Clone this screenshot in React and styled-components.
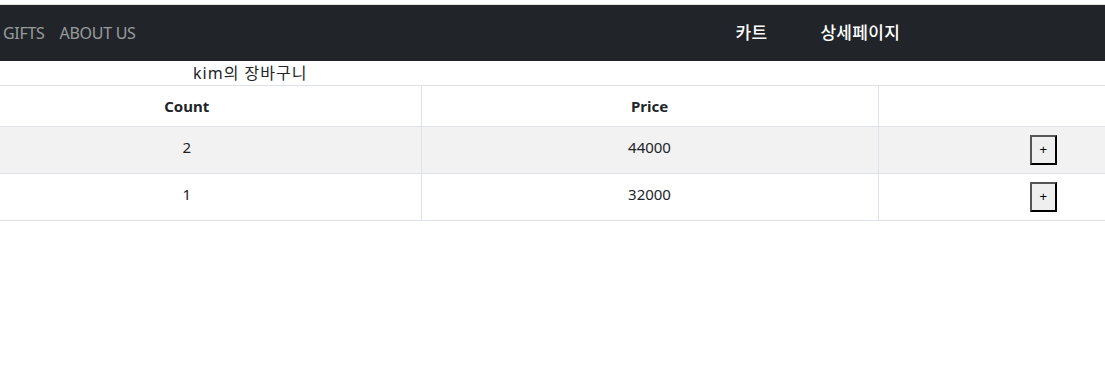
import React from 'react';
import styled, { createGlobalStyle } from 'styled-components';

const GlobalStyle = createGlobalStyle`
  html, body {
    margin: 0;
    padding: 0;
    background: #fff;
    overflow: hidden;
  }
  body {
    font-family: "Noto Sans", "Noto Sans CJK KR", sans-serif;
    color: #212529;
    font-size: 16px;
  }
`;

const Page = styled.div`
  width: 1105px;
  padding-top: 4px;
`;

const Navbar = styled.nav`
  height: 56px;
  background: #212529;
  border-top: 1px solid #e3e3e3;
  display: flex;
  align-items: center;
  padding-left: 3px;
`;

const NavGroup = styled.div`
  display: flex;
  align-items: center;
  gap: ${props => props.$gap}px;
  margin-left: ${props => props.$offset || 0}px;
`;

const NavLink = styled.a`
  font-size: ${props => (props.$active ? 17 : 16)}px;
  letter-spacing: ${props => (props.$active ? '0.3px' : '-0.3px')};
  color: ${props => (props.$active ? '#fff' : 'rgba(255, 255, 255, 0.55)')};
  font-weight: ${props => (props.$active ? 500 : 400)};
  text-decoration: none;
  line-height: 24px;
`;

const CartTitle = styled.div`
  height: 24px;
  line-height: 24px;
  padding-left: 193px;
  font-size: 16px;
  letter-spacing: 1px;
`;

const TableWrap = styled.div`
  margin-left: -47px;
`;

const Table = styled.table`
  border-collapse: collapse;
  width: 1255px;
  table-layout: fixed;
  font-size: 15px;

  th,
  td {
    border-top: 1px solid #dee2e6;
    border-bottom: 1px solid #dee2e6;
    text-align: center;
    vertical-align: top;
    padding: 8px;
    line-height: 24px;
  }

  th + th,
  td + td {
    border-left: 1px solid #dee2e6;
  }

  th {
    font-weight: 700;
  }
`;

const Row = styled.tr`
  background: ${props => (props.$striped ? '#f2f2f2' : '#fff')};
`;

const PlusButton = styled.button`
  width: 27px;
  height: 30px;
  padding: 0;
  background: #efefef;
  border: 2px solid;
  border-color: #555 #000 #000 #555;
  font-family: "Liberation Sans", Arial, sans-serif;
  font-size: 13px;
  color: #000;
  line-height: 26px;
`;

const rows = [
  { count: 2, price: 44000 },
  { count: 1, price: 32000 },
];

const App = () => {
  return (
    <Page>
      <GlobalStyle />
      <Navbar>
        <NavGroup $gap={15}>
          <NavLink>GIFTS</NavLink>
          <NavLink>ABOUT US</NavLink>
        </NavGroup>
        <NavGroup $gap={53} $offset={600}>
          <NavLink $active>카트</NavLink>
          <NavLink $active>상세페이지</NavLink>
        </NavGroup>
      </Navbar>
      <CartTitle>kim의 장바구니</CartTitle>
      <TableWrap>
        <Table>
          <colgroup>
            <col style={{ width: 468 }} />
            <col style={{ width: 457 }} />
            <col style={{ width: 330 }} />
          </colgroup>
          <thead>
            <tr>
              <th>Count</th>
              <th>Price</th>
              <th></th>
            </tr>
          </thead>
          <tbody>
            {rows.map((r, i) => (
              <Row key={i} $striped={i === 0}>
                <td>{r.count}</td>
                <td>{r.price}</td>
                <td>
                  <PlusButton>+</PlusButton>
                </td>
              </Row>
            ))}
          </tbody>
        </Table>
      </TableWrap>
    </Page>
  );
};

export default App;
